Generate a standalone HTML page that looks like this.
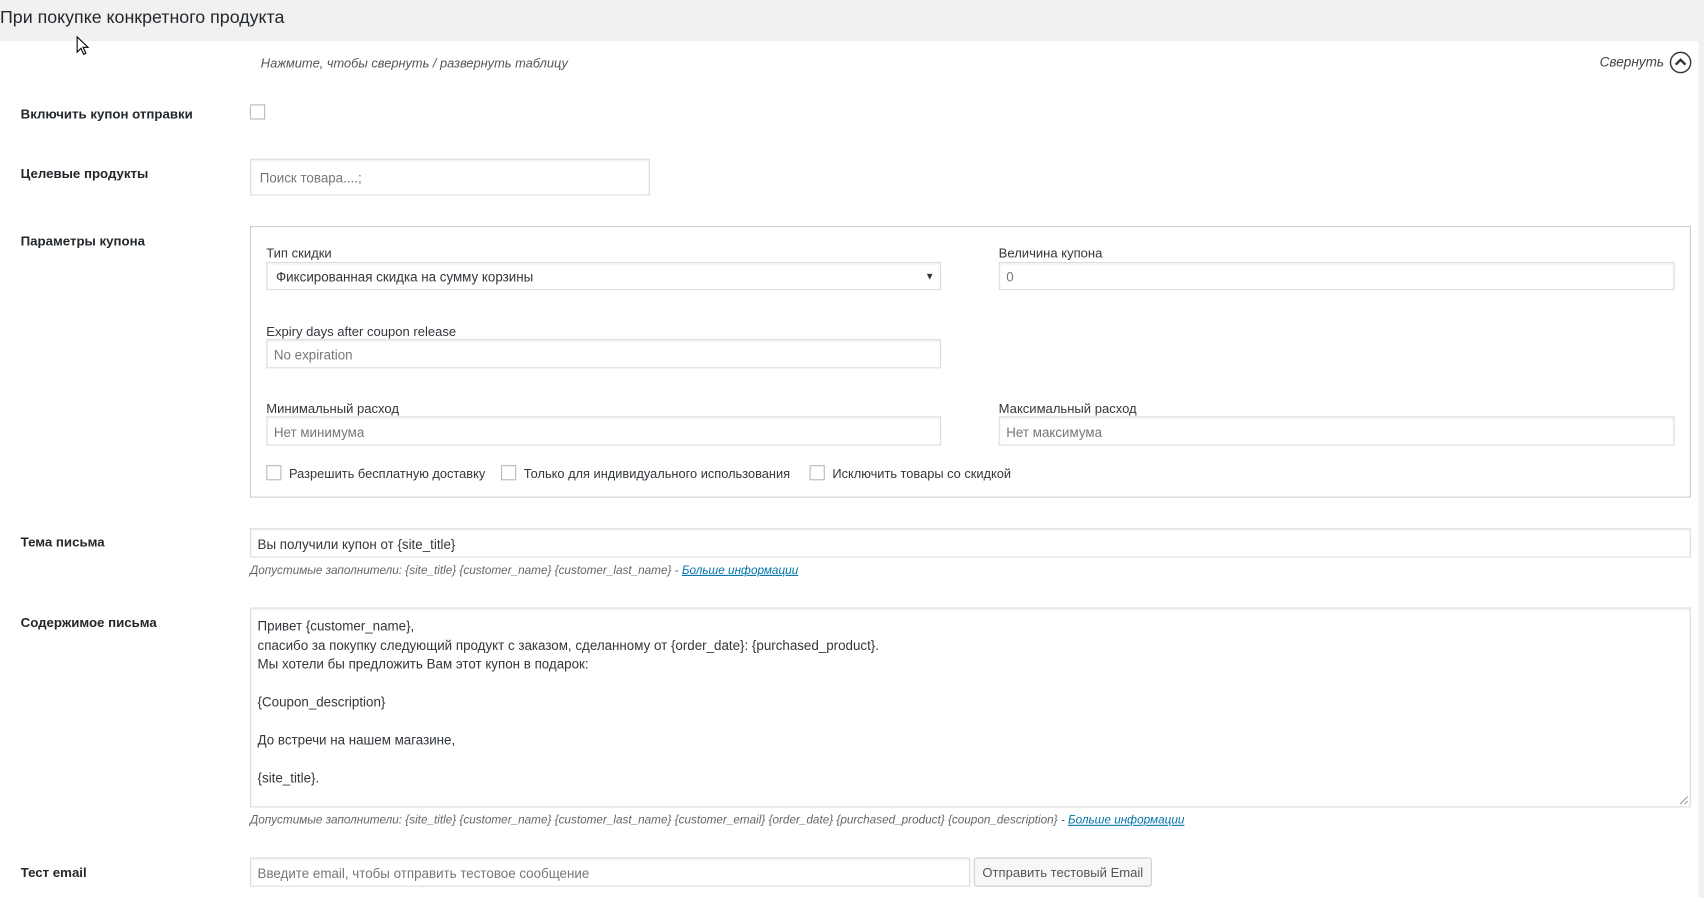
<!DOCTYPE html>
<html><head><meta charset="utf-8"><style>
html,body{margin:0;padding:0;width:1704px;height:897px;overflow:hidden;background:#fff}
#w{position:absolute;left:0;top:0;width:1568px;height:826px;transform:scale(1.0867);transform-origin:0 0;font-family:"Liberation Sans",sans-serif;color:#23282d;font-size:12.3px}
.a{position:absolute;white-space:nowrap}
.lbl{position:absolute;left:19px;font-weight:bold;font-size:12.2px;color:#23282d}
.in{position:absolute;border:1px solid #ddd;box-sizing:border-box;background:#fff;box-shadow:inset 0 1px 2px rgba(0,0,0,.07);padding-left:6px;color:#32373c;display:flex;align-items:center;padding-top:2px}
.ph{color:#777}
.cb{position:absolute;width:14px;height:14px;border:1px solid #b4b9be;box-sizing:border-box;background:#fff}
.hint{position:absolute;left:230px;font-style:italic;font-size:10.8px;color:#666}
.hint a{color:#0073aa;text-decoration:underline}
.sl{position:absolute;font-size:12px;color:#32373c}
</style></head><body><div id="w">
<div class="a" style="left:0;top:0;width:1568px;height:38px;background:#f1f1f1"></div>
<div class="a" style="left:0;top:7px;font-size:16.4px;color:#23282d">При покупке конкретного продукта</div>
<svg class="a" style="left:70px;top:33px" width="12" height="19" viewBox="0 0 12 19"><path d="M1 1 L1 15 L4.5 11.5 L7 17 L9 16 L6.5 10.5 L11 10.5 Z" fill="#fff" stroke="#000" stroke-width="1"/></svg>
<div class="a" style="left:240px;top:51px;font-style:italic;font-size:11.8px;color:#555">Нажмите, чтобы свернуть / развернуть таблицу</div>
<div class="a" style="left:1472px;top:50px;font-style:italic;font-size:12.5px;color:#444">Свернуть</div>
<svg class="a" style="left:1536px;top:47px" width="21" height="21" viewBox="0 0 21 21"><circle cx="10.5" cy="10.5" r="9.3" fill="none" stroke="#333" stroke-width="1.3"/><path d="M6 12.5 L10.5 8 L15 12.5" fill="none" stroke="#333" stroke-width="2.2"/></svg>

<div class="lbl" style="top:98px">Включить купон отправки</div>
<div class="cb" style="left:230px;top:96px"></div>
<div class="lbl" style="top:153px">Целевые продукты</div>
<div class="in" style="left:230px;top:146px;width:368px;height:34px;padding-left:8px"><span class="ph">Поиск товара....;</span></div>
<div class="lbl" style="top:215px">Параметры купона</div>
<div class="a" style="left:230px;top:208px;width:1326px;height:250px;border:1px solid #ccc;box-sizing:border-box"></div>
<div class="sl" style="left:245px;top:226px">Тип скидки</div>
<div class="in" style="left:245px;top:241px;width:621px;height:26px;padding-left:8px">Фиксированная скидка на сумму корзины<span style="position:absolute;right:5px;top:7px;font-size:9px">▼</span></div>
<div class="sl" style="left:919px;top:226px">Величина купона</div>
<div class="in" style="left:919px;top:241px;width:622px;height:26px"><span class="ph">0</span></div>
<div class="sl" style="left:245px;top:298px">Expiry days after coupon release</div>
<div class="in" style="left:245px;top:312px;width:621px;height:27px"><span class="ph">No expiration</span></div>
<div class="sl" style="left:245px;top:369px">Минимальный расход</div>
<div class="in" style="left:245px;top:383px;width:621px;height:27px"><span class="ph">Нет минимума</span></div>
<div class="sl" style="left:919px;top:369px">Максимальный расход</div>
<div class="in" style="left:919px;top:383px;width:622px;height:27px"><span class="ph">Нет максимума</span></div>
<div class="cb" style="left:245px;top:428px"></div><div class="sl" style="left:266px;top:429px;font-size:11.8px">Разрешить бесплатную доставку</div>
<div class="cb" style="left:461px;top:428px"></div><div class="sl" style="left:482px;top:429px;font-size:11.8px">Только для индивидуального использования</div>
<div class="cb" style="left:745px;top:428px"></div><div class="sl" style="left:766px;top:429px;font-size:11.8px">Исключить товары со скидкой</div>

<div class="lbl" style="top:492px">Тема письма</div>
<div class="in" style="left:230px;top:486px;width:1326px;height:27px">Вы получили купон от {site_title}</div>
<div class="hint" style="top:519px">Допустимые заполнители: {site_title} {customer_name} {customer_last_name} - <a>Больше информации</a></div>

<div class="lbl" style="top:566px">Содержимое письма</div>
<div class="in" style="left:230px;top:559px;width:1326px;height:184px;align-items:flex-start;padding-top:8px;line-height:17.5px;font-size:12.3px">Привет {customer_name},<br>спасибо за покупку следующий продукт с заказом, сделанному от {order_date}: {purchased_product}.<br>Мы хотели бы предложить Вам этот купон в подарок:<br><br>{Coupon_description}<br><br>До встречи на нашем магазине,<br><br>{site_title}.</div>
<svg class="a" style="left:1545px;top:732px" width="9" height="9"><path d="M1 8 L8 1 M5 8 L8 5" stroke="#999" stroke-width="1"/></svg>
<div class="hint" style="top:749px">Допустимые заполнители: {site_title} {customer_name} {customer_last_name} {customer_email} {order_date} {purchased_product} {coupon_description} - <a>Больше информации</a></div>

<div class="lbl" style="top:796px">Тест email</div>
<div class="in" style="left:230px;top:789px;width:663px;height:27px"><span class="ph">Введите email, чтобы отправить тестовое сообщение</span></div>
<div class="a" style="left:896px;top:789px;width:164px;height:27px;border:1px solid #ccc;box-sizing:border-box;background:#f7f7f7;border-radius:3px;text-align:center;line-height:26px;color:#555;font-size:12px">Отправить тестовый Email</div>
<div class="a" style="left:1563px;top:38px;width:5px;height:788px;background:#f1f1f1"></div>
</div></body></html>
